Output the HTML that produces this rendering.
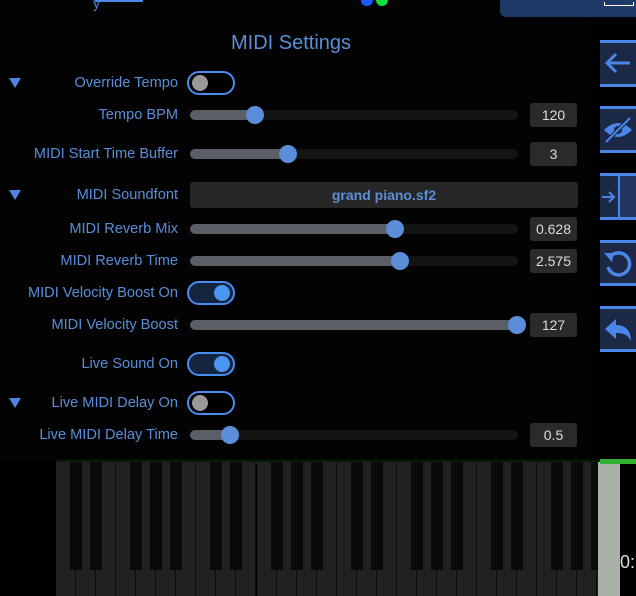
<!DOCTYPE html>
<html><head><style>
*{margin:0;padding:0;box-sizing:border-box}
body{width:636px;height:596px;background:#000;position:relative;overflow:hidden;font-family:"Liberation Sans",sans-serif}
.a{position:absolute}
.lbl{position:absolute;right:458px;color:#5a8ed8;font-size:14.6px;white-space:nowrap;transform:translateY(-50%)}
.tri{position:absolute;left:9px;width:0;height:0;border-left:6px solid transparent;border-right:6px solid transparent;border-top:10px solid #4a86e8;transform:translateY(-50%)}
.trk{position:absolute;left:190px;width:328px;height:10px;border-radius:5px;background:#141414;transform:translateY(-50%);overflow:visible}
.fill{position:absolute;left:0;top:0;height:10px;border-radius:5px;background:#5a5e66}
.th{position:absolute;top:-4px;width:18px;height:18px;border-radius:50%;background:#5b8dd9;margin-left:-9px}
.val{position:absolute;left:530px;width:47px;height:24px;background:#2a2a2a;border-radius:3px;color:#ddd;font-size:14px;text-align:center;line-height:24px;transform:translateY(-50%)}
.tg{position:absolute;left:187px;width:48px;height:24px;border:2px solid #4a8cf0;border-radius:12px;transform:translateY(-50%);background:#000}
.tg.on{background:#152540}
.tg i{position:absolute;top:2px;width:16px;height:16px;border-radius:50%;background:#999;left:3px}
.tg.on i{background:#4a96f0;left:25px}
.btn{position:absolute;left:600px;width:36px;background:#1c2946;border-top:3px solid #4a86e8;border-bottom:3px solid #4a86e8}
.key{position:absolute;top:462px;width:20px;height:134px;background:#212121;border-right:1px solid #0c0c0c}
.bk{position:absolute;top:462px;width:12px;height:108px;background:#0a0a0a}
</style></head><body>
<div class="a" style="left:0;top:0;width:590px;height:460px;background:#030303"></div>

<div class="a" style="left:500px;top:0;width:136px;height:17px;background:#1f3a66;border-bottom-left-radius:6px"></div>
<div class="a" style="left:604px;top:2px;width:30px;height:4px;border:1px solid #fff;border-top:none"></div>
<div class="a" style="left:361px;top:-6px;width:12px;height:12px;border-radius:50%;background:#1a5cff"></div>
<div class="a" style="left:376px;top:-6px;width:12px;height:12px;border-radius:50%;background:#10e040"></div>
<div class="a" style="left:93px;top:-5px;color:#4a86e8;font-size:14px">y</div>
<div class="a" style="left:95px;top:0;width:48px;height:2px;background:#4a86e8"></div>

<!-- piano -->
<div class="a" style="left:56px;top:458px;width:544px;height:6px;background:linear-gradient(#000,#0c3a0c)"></div>
<div id="p"></div>
<div class="a" style="left:598px;top:462px;width:22px;height:134px;background:#a8b0a8"></div>
<div class="a" style="left:600px;top:459px;width:36px;height:5px;background:#30b030"></div>
<div class="a" style="left:620px;top:552px;color:#ddd;font-size:18px">0:</div>

<div class="a" style="left:231px;top:32px;color:#5a8ed8;font-size:20px">MIDI Settings</div>

<div class="tri" style="top:83px"></div><div class="lbl" style="top:83px">Override Tempo</div><div class="tg" style="top:83px"><i></i></div>
<div class="lbl" style="top:115px">Tempo BPM</div><div class="trk" style="top:115px"><div class="fill" style="width:65px"></div><div class="th" style="left:65px"></div></div><div class="val" style="top:115px">120</div>
<div class="lbl" style="top:154px">MIDI Start Time Buffer</div><div class="trk" style="top:154px"><div class="fill" style="width:98px"></div><div class="th" style="left:98px"></div></div><div class="val" style="top:154px">3</div>
<div class="tri" style="top:195px"></div><div class="lbl" style="top:195px">MIDI Soundfont</div>
<div class="a" style="left:190px;top:182px;width:388px;height:26px;background:#262626;border-radius:3px;color:#5a8ed8;font-size:14px;font-weight:bold;text-align:center;line-height:26px">grand piano.sf2</div>
<div class="lbl" style="top:229px">MIDI Reverb Mix</div><div class="trk" style="top:229px"><div class="fill" style="width:205px"></div><div class="th" style="left:205px"></div></div><div class="val" style="top:229px">0.628</div>
<div class="lbl" style="top:261px">MIDI Reverb Time</div><div class="trk" style="top:261px"><div class="fill" style="width:210px"></div><div class="th" style="left:210px"></div></div><div class="val" style="top:261px">2.575</div>
<div class="lbl" style="top:293px">MIDI Velocity Boost On</div><div class="tg on" style="top:293px"><i></i></div>
<div class="lbl" style="top:325px">MIDI Velocity Boost</div><div class="trk" style="top:325px"><div class="fill" style="width:327px"></div><div class="th" style="left:327px"></div></div><div class="val" style="top:325px">127</div>
<div class="lbl" style="top:364px">Live Sound On</div><div class="tg on" style="top:364px"><i></i></div>
<div class="tri" style="top:403px"></div><div class="lbl" style="top:403px">Live MIDI Delay On</div><div class="tg" style="top:403px"><i></i></div>
<div class="lbl" style="top:435px">Live MIDI Delay Time</div><div class="trk" style="top:435px"><div class="fill" style="width:40px"></div><div class="th" style="left:40px"></div></div><div class="val" style="top:435px">0.5</div>

<!-- right buttons -->
<div class="btn" style="top:40px;height:47px"><svg width="36" height="41" viewBox="0 0 36 41"><path d="M30 20H8M16 11l-9 9 9 9" stroke="#4a86e8" stroke-width="3" fill="none"/></svg></div>
<div class="btn" style="top:106px;height:47px"><svg width="36" height="41" viewBox="0 0 36 41"><path d="M4 21q14-14 28 0q-14 14-28 0z" fill="#4a86e8"/><circle cx="18" cy="21" r="4" fill="#1c2946"/><path d="M6 33L30 9" stroke="#1c2946" stroke-width="4"/><path d="M6 33L30 9" stroke="#4a86e8" stroke-width="2"/></svg></div>
<div class="btn" style="top:173px;height:47px"><div class="a" style="left:18px;top:0;width:2px;height:41px;background:#4a86e8"></div><div class="a" style="left:20px;top:0;width:16px;height:41px;background:#223560"></div><svg width="18" height="41"><path d="M2 21h12M9 16l5 5-5 5" stroke="#4a86e8" stroke-width="2" fill="none"/></svg></div>
<div class="btn" style="top:240px;height:46px"><svg width="36" height="40" viewBox="0 0 36 40"><path d="M10 14A11 11 0 1 1 8 24" stroke="#4a86e8" stroke-width="3.5" fill="none"/><path d="M4 10l10 0-2 9z" fill="#4a86e8"/></svg></div>
<div class="btn" style="top:306px;height:46px"><svg width="36" height="40" viewBox="0 0 36 40"><path d="M5 20l11-10v6c10 0 15 6 15 16c-3-6-7-8-15-8v6z" fill="#4a86e8"/></svg></div>

<script>
var p=document.getElementById('p'),h='';
var w=20.05;
for(var i=0;i<28;i++){h+='<div class="key" style="left:'+(56+i*w)+'px"></div>';}
var pat=[1,1,0,1,1,1,0];
for(var i=0;i<27;i++){if(pat[i%7])h+='<div class="bk" style="left:'+(56+(i+1)*w-6)+'px"></div>';}
p.innerHTML=h;
</script>
</body></html>
